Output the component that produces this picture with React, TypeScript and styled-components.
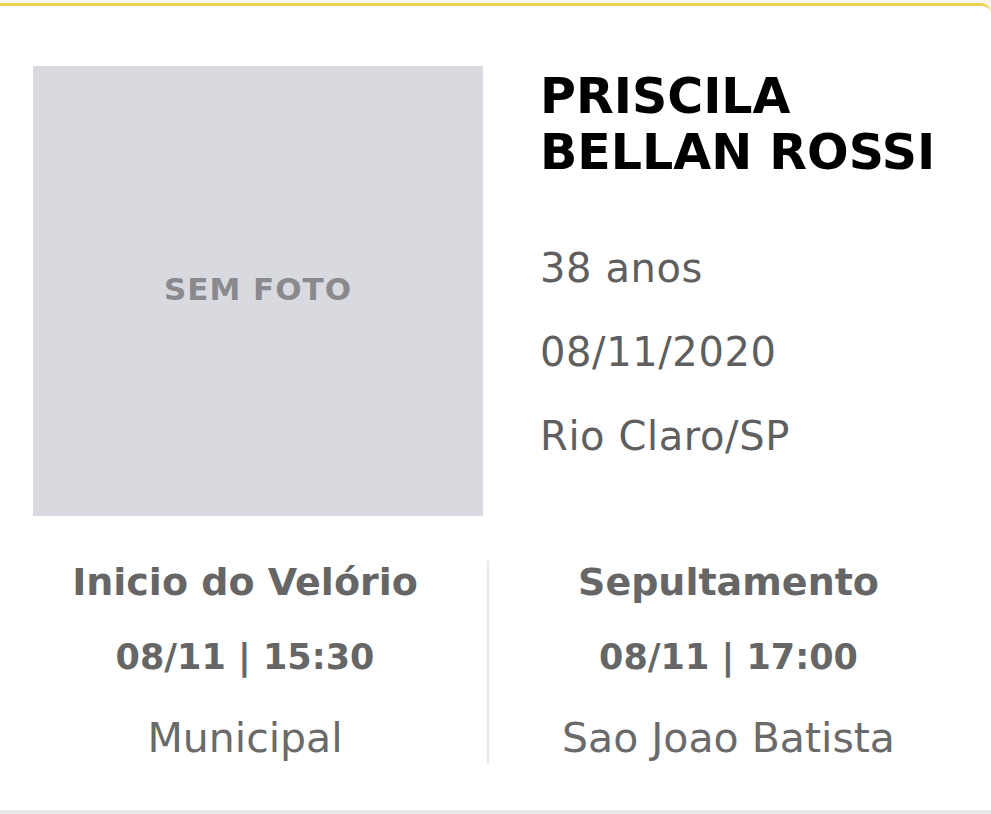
import React from 'react';
import styled, { createGlobalStyle } from 'styled-components';

const GlobalStyle = createGlobalStyle`
  html, body {
    margin: 0;
    padding: 0;
    background: #f7f5ee;
  }
  body {
    font-family: 'DejaVu Sans', 'Open Sans', sans-serif;
  }
`;

const App = () => {
  return (
    <>
      <GlobalStyle />
      <Card>
        <TopRow>
          <Photo>SEM FOTO</Photo>
          <Info>
            <Name>PRISCILA BELLAN ROSSI</Name>
            <DetailList>
              <Detail>38 anos</Detail>
              <Detail>08/11/2020</Detail>
              <Detail>Rio Claro/SP</Detail>
            </DetailList>
          </Info>
        </TopRow>
        <EventRow>
          <Event>
            <EventTitle>Inicio do Velório</EventTitle>
            <EventTime>08/11 | 15:30</EventTime>
            <EventPlace>Municipal</EventPlace>
          </Event>
          <Divider />
          <Event>
            <EventTitle>Sepultamento</EventTitle>
            <EventTime>08/11 | 17:00</EventTime>
            <EventPlace>Sao Joao Batista</EventPlace>
          </Event>
        </EventRow>
      </Card>
    </>
  );
};

export default App;

const Card = styled.div`
  margin-top: 3px;
  width: 100%;
  height: 811px;
  box-sizing: border-box;
  background: #ffffff;
  border-top: 3px solid #ecd04f;
  border-bottom: 4px solid #e8e8e8;
  border-top-right-radius: 10px;
  padding: 60px 0 0 33px;
  display: flex;
  flex-direction: column;
`;

const TopRow = styled.div`
  display: flex;
  gap: 57px;
`;

const Photo = styled.div`
  width: 450px;
  height: 450px;
  flex-shrink: 0;
  background: #d9dadf;
  color: #8a8a8e;
  font-size: 31px;
  letter-spacing: 1px;
  font-weight: 700;
  display: flex;
  align-items: center;
  justify-content: center;
  padding-bottom: 4px;
  box-sizing: border-box;
`;

const Info = styled.div`
  display: flex;
  flex-direction: column;
`;

const Name = styled.h1`
  margin: 3px 0 0;
  width: 440px;
  font-size: 49px;
  line-height: 56px;
  font-weight: 700;
  color: #000000;
`;

const DetailList = styled.div`
  margin-top: 63px;
  display: flex;
  flex-direction: column;
  gap: 36px;
`;

const Detail = styled.div`
  font-size: 40px;
  line-height: 48px;
  letter-spacing: 0.6px;
  color: #5f5f5f;
`;

const EventRow = styled.div`
  margin-top: 45px;
  margin-left: -33px;
  display: grid;
  grid-template-columns: 490px 2px 1fr;
  padding-right: 26px;
`;

const Event = styled.div`
  display: flex;
  flex-direction: column;
  align-items: center;
  margin-top: -1px;
`;

const Divider = styled.div`
  width: 2px;
  height: 203px;
  margin-left: -3px;
  background: #e8e8e8;
`;

const EventTitle = styled.div`
  font-size: 38px;
  line-height: 44px;
  font-weight: 700;
  color: #666666;
`;

const EventTime = styled.div`
  margin-top: 31px;
  font-size: 35px;
  line-height: 44px;
  font-weight: 700;
  color: #666666;
`;

const EventPlace = styled.div`
  margin-top: 37px;
  font-size: 41px;
  line-height: 44px;
  color: #6a6a6a;
`;
